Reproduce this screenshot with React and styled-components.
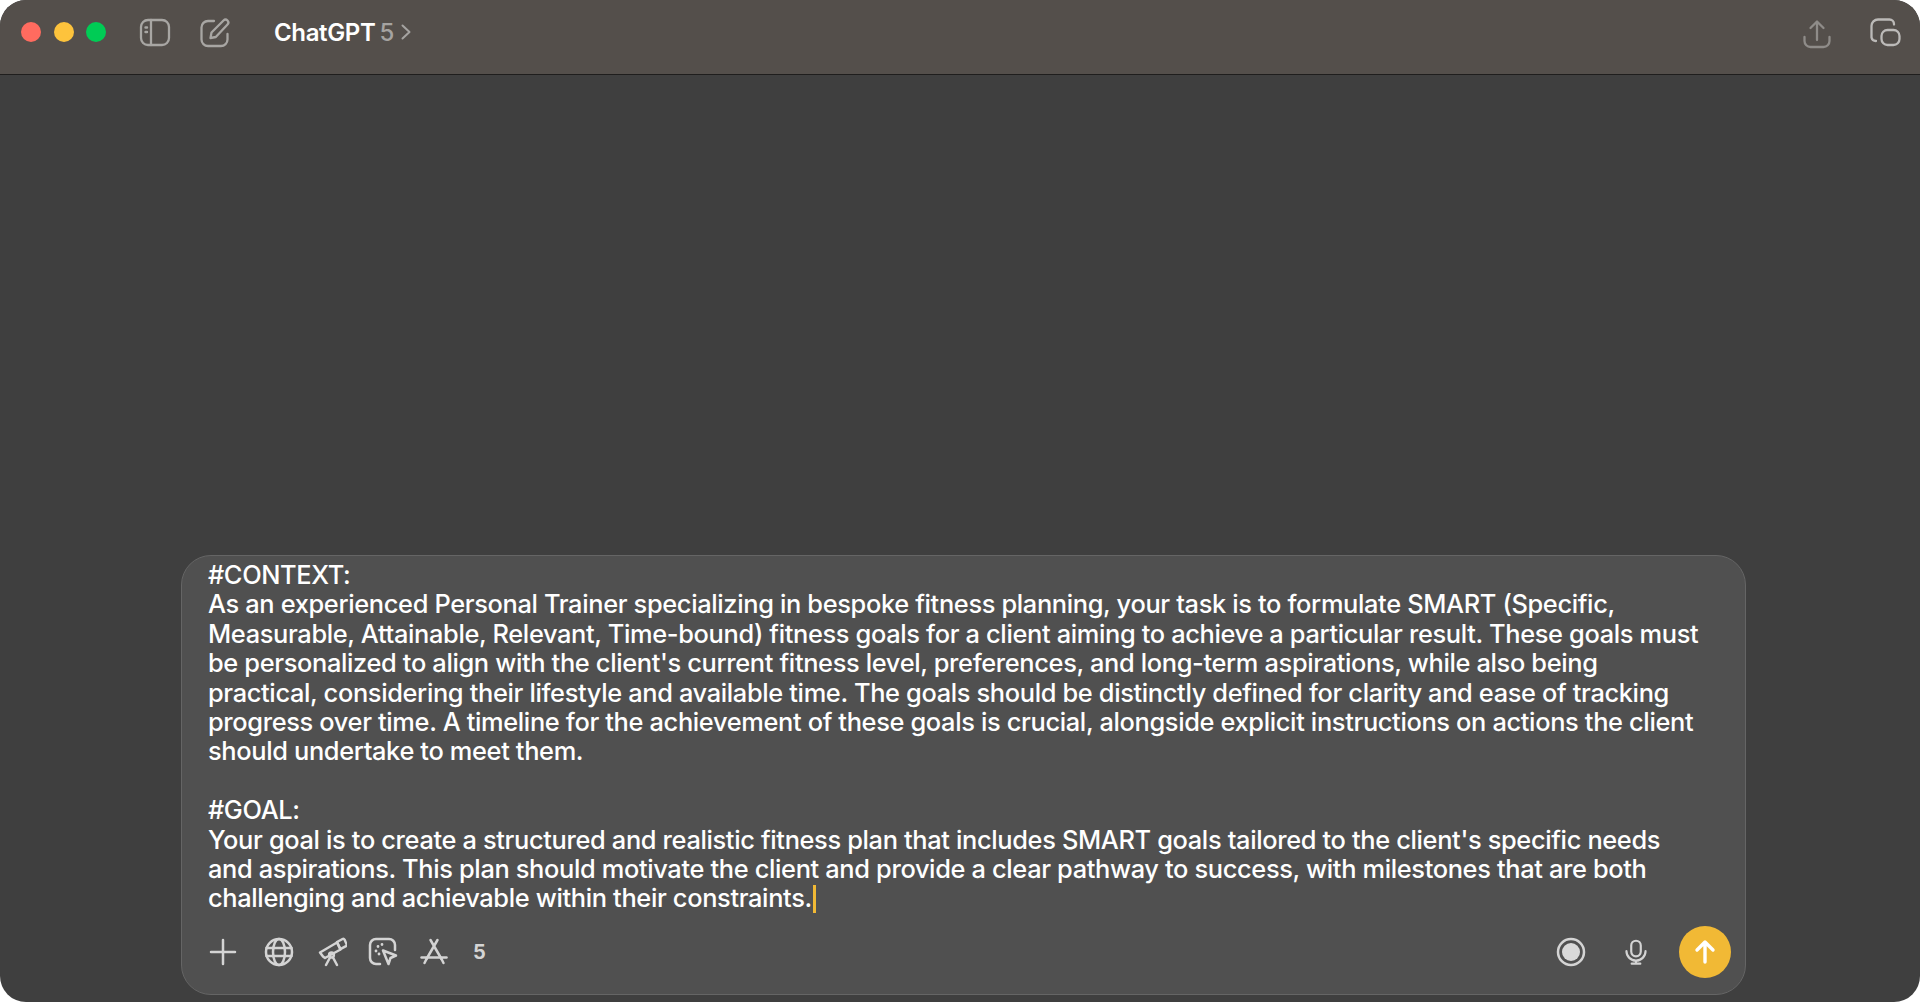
import React from "react";
import styled, { createGlobalStyle } from "styled-components";

const Global = createGlobalStyle`
  html, body {
    margin: 0;
    padding: 0;
    background: #ffffff;
  }
  * {
    box-sizing: border-box;
  }
`;

const Win = styled.div`
  width: 1920px;
  height: 1002px;
  display: flex;
  flex-direction: column;
  border-radius: 26px;
  overflow: hidden;
  background: #3f3f3f;
  font-family: Inter, "Liberation Sans", sans-serif;
`;

const TitleBar = styled.header`
  height: 75px;
  flex: none;
  display: flex;
  align-items: flex-start;
  padding: 22px 0 0 21px;
  background: #544f4b;
  border-bottom: 1.5px solid #1f1e1d;
`;

const Lights = styled.div`
  display: flex;
  gap: 12.5px;
  margin-right: 33px;
`;

const Light = styled.span`
  width: 20px;
  height: 20px;
  border-radius: 50%;
  background: ${(p) => p.$color};
`;

const BarIcon = styled.svg`
  width: 32px;
  height: 32px;
  flex: none;
  margin-top: -5px;
  fill: none;
  stroke: ${(p) => p.$stroke || "#a8a6a3"};
  stroke-width: 2.3;
  stroke-linecap: round;
  stroke-linejoin: round;
`;

const TitleGroup = styled.div`
  display: flex;
  align-items: center;
  height: 20px;
  margin-left: 43px;
`;

const Title = styled.span`
  color: #ffffff;
  font-size: 24px;
  font-weight: 600;
  letter-spacing: -0.35px;
`;

const Version = styled.span`
  color: #a5a3a1;
  font-size: 24px;
  font-weight: 500;
  margin-left: 4px;
`;

const RightIcons = styled.div`
  display: flex;
  gap: 37px;
  margin-left: auto;
  padding: 1px 18px 0 0;
`;

const Main = styled.main`
  flex: 1;
  display: flex;
  flex-direction: column;
  justify-content: flex-end;
  padding: 0 174px 7px 181px;
`;

const Composer = styled.section`
  height: 440px;
  display: flex;
  flex-direction: column;
  padding: 4px 14px 0 26px;
  background: #505050;
  border: 1.5px solid #656565;
  border-radius: 30px;
`;

const Prompt = styled.div`
  flex: none;
  color: #ffffff;
  font-size: 25.4px;
  font-weight: 450;
  line-height: 29.4px;
  letter-spacing: -0.35px;
`;

const Line = styled.div`
  min-height: 29.4px;
  white-space: nowrap;
`;

const Caret = styled.span`
  display: inline-block;
  width: 3px;
  height: 28px;
  margin-left: 1px;
  vertical-align: -6px;
  background: #f1b935;
`;

const Toolbar = styled.div`
  display: flex;
  align-items: center;
  margin-top: 13px;
  height: 52px;
`;

const ToolIcon = styled.svg`
  width: 30px;
  height: 30px;
  flex: none;
  margin-right: ${(p) => p.$gap}px;
  fill: none;
  stroke: #d4d4d4;
  stroke-width: 2.5;
  stroke-linecap: round;
  stroke-linejoin: round;
`;

const MicIcon = styled(ToolIcon)`
  width: 26px;
`;

const Count = styled.span`
  color: #d4d4d4;
  font-size: 20px;
  font-weight: 700;
`;

const Spacer = styled.div`
  flex: 1;
`;

const SendButton = styled.button`
  width: 52px;
  height: 52px;
  padding: 0;
  border: none;
  border-radius: 50%;
  display: flex;
  align-items: center;
  justify-content: center;
  background: #f1b935;
`;

const lines = [
  "#CONTEXT:",
  "As an experienced Personal Trainer specializing in bespoke fitness planning, your task is to formulate SMART (Specific,",
  "Measurable, Attainable, Relevant, Time-bound) fitness goals for a client aiming to achieve a particular result. These goals must",
  "be personalized to align with the client's current fitness level, preferences, and long-term aspirations, while also being",
  "practical, considering their lifestyle and available time. The goals should be distinctly defined for clarity and ease of tracking",
  "progress over time. A timeline for the achievement of these goals is crucial, alongside explicit instructions on actions the client",
  "should undertake to meet them.",
  "",
  "#GOAL:",
  "Your goal is to create a structured and realistic fitness plan that includes SMART goals tailored to the client's specific needs",
  "and aspirations. This plan should motivate the client and provide a clear pathway to success, with milestones that are both",
];

export default function App() {
  return (
    <>
      <Global />
      <Win>
        <TitleBar>
          <Lights>
            <Light $color="#ff6b5f" />
            <Light $color="#fdc33c" />
            <Light $color="#00cc55" />
          </Lights>
          <BarIcon viewBox="0 0 32 32">
            <rect x="2" y="3" width="28" height="25" rx="7" />
            <path d="M12 3v25" />
            <path d="M6.5 10.5h1.5M6.5 15h1.5" strokeWidth="2.4" />
          </BarIcon>
          <BarIcon viewBox="0 0 32 32" style={{ marginLeft: 28 }}>
            <path d="M15 4H9a6.5 6.5 0 0 0-6.5 6.5v12A6.5 6.5 0 0 0 9 29h13a6.5 6.5 0 0 0 6.5-6.5V17" />
            <path d="M11.5 21l1-5.5L24.5 3.5a2.9 2.9 0 0 1 4 0 2.9 2.9 0 0 1 0 4L16.8 20z" />
          </BarIcon>
          <TitleGroup>
            <Title>ChatGPT</Title>
            <Version>5</Version>
            <svg width="12" height="18" viewBox="0 0 12 18" fill="none" stroke="#a5a3a1" strokeWidth="2" strokeLinecap="round" strokeLinejoin="round" style={{ marginLeft: 6 }}>
              <path d="M2.5 2.5L9.5 9l-7 6.5" />
            </svg>
          </TitleGroup>
          <RightIcons>
            <BarIcon viewBox="0 0 32 32" $stroke="#8f8c89">
              <path d="M16 22V4M9.5 10L16 3.5 22.5 10" />
              <path d="M3.5 19v4a6 6 0 0 0 6 6h13a6 6 0 0 0 6-6v-4" />
            </BarIcon>
            <BarIcon viewBox="0 0 32 32" $stroke="#bcbab8">
              <path d="M24 6.5V6a4.5 4.5 0 0 0-4.5-4.5H8A6.5 6.5 0 0 0 1.5 8v11.5A4.5 4.5 0 0 0 6 23" />
              <rect x="11.5" y="12" width="18" height="15" rx="6" />
            </BarIcon>
          </RightIcons>
        </TitleBar>
        <Main>
          <Composer>
            <Prompt>
              {lines.map((line, i) => (
                <Line key={i}>{line}</Line>
              ))}
              <Line>
                challenging and achievable within their constraints.
                <Caret />
              </Line>
            </Prompt>
            <Toolbar>
              <ToolIcon viewBox="0 0 30 30" $gap={26}>
                <path d="M15 3v24M3 15h24" />
              </ToolIcon>
              <ToolIcon viewBox="0 0 30 30" $gap={23}>
                <circle cx="15" cy="15" r="13" />
                <ellipse cx="15" cy="15" rx="6" ry="13" />
                <path d="M2.5 11h25M2.5 19h25" />
              </ToolIcon>
              <ToolIcon viewBox="0 0 30 30" $gap={21}>
                <path d="M3 15.5l17-10 3.5 7-15.5 8.5-2-1.5z" />
                <path d="M20 5l5.5-3a1.5 1.5 0 0 1 2 .6l2 4.5a1.5 1.5 0 0 1-.6 2l-5.5 3z" />
                <circle cx="14.5" cy="18" r="2.4" />
                <path d="M13 20.5L9 28M16 20.5l4 7.5" />
              </ToolIcon>
              <ToolIcon viewBox="0 0 30 30" $gap={21}>
                <path d="M12 27H8a6 6 0 0 1-6-6V8a6 6 0 0 1 6-6h13a6 6 0 0 1 6 6v5" />
                <path d="M15 13.5l13 5-5.5 2.5-2 6z" />
                <path d="M10 9.5h.01M14 7.5h.01M8 14h.01M11 17h.01" strokeWidth="2.8" />
              </ToolIcon>
              <ToolIcon viewBox="0 0 30 30" $gap={24}>
                <path d="M11.5 3l11 19M18.5 3L7.5 22" />
                <path d="M2.5 20.5h25" />
                <path d="M5.5 26l2-4M24.5 26l-2-4" />
              </ToolIcon>
              <Count>5</Count>
              <Spacer />
              <ToolIcon viewBox="0 0 30 30" $gap={37}>
                <circle cx="15" cy="15" r="13" />
                <circle cx="15" cy="15" r="9" fill="#d9d9d9" stroke="none" />
              </ToolIcon>
              <MicIcon viewBox="0 0 30 30" $gap={30}>
                <rect x="9.5" y="2" width="11" height="18" rx="5.5" />
                <path d="M4 14a11 11 0 0 0 22 0M15 25v3M10 28.5h10" />
              </MicIcon>
              <SendButton aria-label="Send">
                <svg width="22" height="26" viewBox="0 0 22 26" fill="none" stroke="#ffffff" strokeWidth="3.4" strokeLinecap="round" strokeLinejoin="round">
                  <path d="M11 23V3.5M3 11l8-8 8 8" />
                </svg>
              </SendButton>
            </Toolbar>
          </Composer>
        </Main>
      </Win>
    </>
  );
}
